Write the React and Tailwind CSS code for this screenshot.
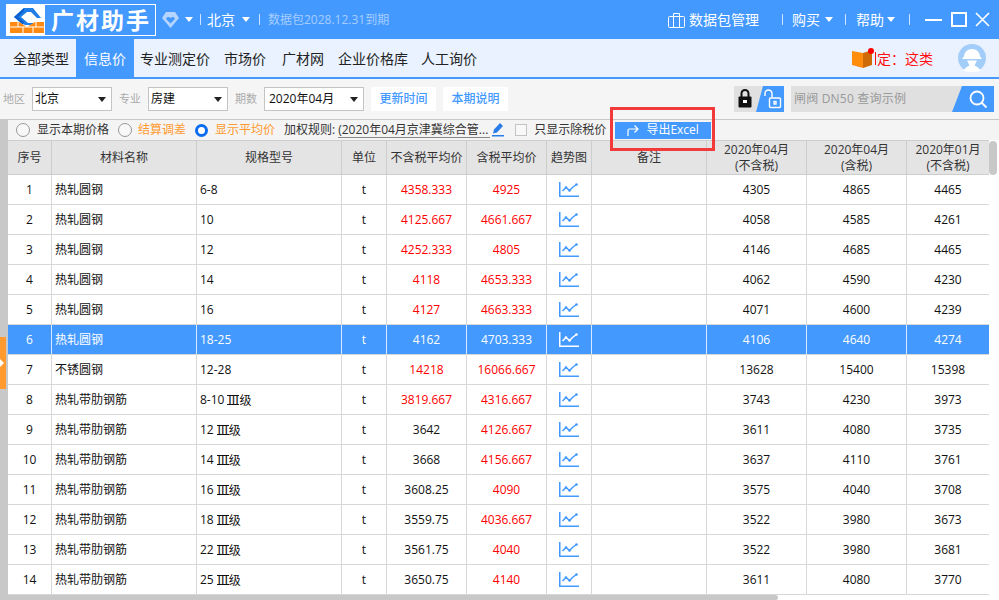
import React from 'react';

const FONT = '"Open Sans", "Noto Sans CJK SC", sans-serif';

const rows = [
    [1, '热轧圆钢', '6-8', '4358.333', '4925', 4305, 4865, 4465, true, true],
    [2, '热轧圆钢', '10', '4125.667', '4661.667', 4058, 4585, 4261, true, true],
    [3, '热轧圆钢', '12', '4252.333', '4805', 4146, 4685, 4465, true, true],
    [4, '热轧圆钢', '14', '4118', '4653.333', 4062, 4590, 4230, true, true],
    [5, '热轧圆钢', '16', '4127', '4663.333', 4071, 4600, 4239, true, true],
    [6, '热轧圆钢', '18-25', '4162', '4703.333', 4106, 4640, 4274, false, false],
    [7, '不锈圆钢', '12-28', '14218', '16066.667', 13628, 15400, 15398, true, true],
    [8, '热轧带肋钢筋', '8-10', '3819.667', '4316.667', 3743, 4230, 3973, true, true],
    [9, '热轧带肋钢筋', '12', '3642', '4126.667', 3611, 4080, 3735, false, true],
    [10, '热轧带肋钢筋', '14', '3668', '4156.667', 3637, 4110, 3761, false, true],
    [11, '热轧带肋钢筋', '16', '3608.25', '4090', 3575, 4040, 3708, false, true],
    [12, '热轧带肋钢筋', '18', '3559.75', '4036.667', 3522, 3980, 3673, false, true],
    [13, '热轧带肋钢筋', '22', '3561.75', '4040', 3522, 3980, 3681, false, true],
    [14, '热轧带肋钢筋', '25', '3650.75', '4140', 3611, 4080, 3770, false, true],
];

const tabs = [
    ['全部类型', 'w-[76px] pl-[6px]'],
    ['信息价', 'w-[58px]'],
    ['专业测定价', 'w-[82px]'],
    ['市场价', 'w-[58px]'],
    ['广材网', 'w-[58px]'],
    ['企业价格库', 'w-[82px]'],
    ['人工询价', 'w-[70px]'],
];

const COLS = 'grid grid-cols-[44px_145px_145px_45px_80px_80px_45px_115px_100px_100px_82px]';

function Caret({className}) {
    return <span className={`w-0 h-0 border-x-[4px] border-x-transparent border-t-[5px] border-t-white ${className}`}/>;
}

function Sep({className}) {
    return <span className={`w-px h-[11px] bg-[#cfe3ff] ${className}`}/>;
}

function TrendIcon({color}) {
    return (
        <svg width="20" height="15" viewBox="0 0 20 15">
            <path d="M0 0h1.500v13.500H20V15H0z" fill={color}/>
            <path d="M3.500 9L7 5.500l3.500 3L14 5l3.500-2.500" fill="none" stroke={color} strokeWidth="1.500"/>
            <circle cx="7" cy="5.500" r="1.300" fill={color}/>
            <circle cx="10.500" cy="8.500" r="1.300" fill={color}/>
            <circle cx="17.500" cy="2.500" r="1.300" fill={color}/>
        </svg>
    );
}

function Logo() {
    return (
        <div className="flex h-[32px] w-[150px] ml-[6px] border border-white">
            <div className="w-[39px] bg-white shrink-0 ml-[-1px] mt-[-1px] h-[32px]">
                <svg width="39" height="32" viewBox="0 0 39 32">
                    <path d="M18 4h9l8 10h-4l-6-6h-4l-6 5 7 6h6l-3 2h-6L8 13z" fill="#1f7fe6"/>
                    <path d="M8 13l10-9v3l-6 6 6 5-1 3z" fill="#0a5fd0"/>
                    <path d="M4 18h9l8 5 8-5h9v11H4z" fill="#ff8a12"/>
                    <path d="M4 23h34M12 18v5M30 18v5M17 23v6M27 23v6" stroke="#fff" strokeWidth="1"/>
                </svg>
            </div>
            <span className="ml-[6px] text-[23px] leading-[30px] font-bold text-white tracking-[2px] whitespace-nowrap">广材助手</span>
        </div>
    );
}

function TitleBar() {
    return (
        <div className="h-[39px] bg-[#4499ff] flex items-center text-white">
            <Logo/>
            <svg width="17" height="16" viewBox="0 0 17 16" className="ml-[6px]">
                <path d="M4 0h9l4 6-8.500 10L0 6z" fill="#b5d5ff"/>
                <path d="M8.500 11.500L4.500 7.500c-1-2 1.800-3.500 4-1.500 2.200-2 5-.5 4 1.500z" fill="#4499ff"/>
            </svg>
            <Caret className="ml-[6px]"/>
            <Sep className="ml-[7px]"/>
            <span className="ml-[6px] text-[14px]">北京</span>
            <Caret className="ml-[7px]"/>
            <Sep className="ml-[9px]"/>
            <span className="ml-[8px] text-[12px] text-[#a6cdff]">数据包2028.12.31到期</span>
            <svg width="17" height="16" viewBox="0 0 17 16" fill="none" stroke="#fff" className="ml-auto">
                <rect x="0.500" y="4.500" width="16" height="11" rx="1"/>
                <path d="M5.500 15V1.500h6V15"/>
            </svg>
            <span className="ml-[4px] text-[14px]">数据包管理</span>
            <Sep className="ml-[23px]"/>
            <span className="ml-[9px] text-[14px]">购买</span>
            <Caret className="ml-[5px]"/>
            <Sep className="ml-[12px]"/>
            <span className="ml-[10px] text-[14px]">帮助</span>
            <Caret className="ml-[3px]"/>
            <Sep className="ml-[14px]"/>
            <span className="ml-[15px] w-[17px] h-[2px] bg-white"/>
            <span className="ml-[9px] w-[16px] h-[15px] border-2 border-white"/>
            <svg width="15" height="15" viewBox="0 0 15 15" className="ml-[8px] mr-[9px]" stroke="#fff" strokeWidth="1.600">
                <path d="M1 1l13 13M14 1L1 14"/>
            </svg>
        </div>
    );
}

function TabBar() {
    return (
        <div className="h-[40px] bg-[#ebf2ff] border-b-2 border-[#4499ff] flex items-stretch text-[14px] text-[#222]">
            {tabs.map(([label, w], i) => (
                <div key={label} className={`${w} flex items-center justify-center whitespace-nowrap ${i === 1 ? 'bg-[#4499ff] text-white' : ''}`}>
                    {label}
                </div>
            ))}
            <div className="ml-auto flex items-center">
                <div className="relative w-[21px] h-[19px] mt-[1px]">
                    <svg width="21" height="19" viewBox="0 0 21 19">
                        <path d="M0 2l11 2v15L0 16z" fill="#ff8c0a"/>
                        <path d="M11 4l9-3v15l-9 3z" fill="#cf6a08"/>
                    </svg>
                    <span className="absolute right-[-1px] top-[-1px] w-[6px] h-[6px] rounded-full bg-[#ff0000]"/>
                </div>
                <div className="w-[60px] ml-[2px] flex items-center whitespace-nowrap text-[14px] text-[#ff1010]">
                    <span className="w-px h-[13px] bg-[#ff1010] mr-[1px]"/>
                    <span>定：这类</span>
                </div>
                <svg width="28" height="28" viewBox="0 0 28 28" className="ml-[23px] mr-[13px]">
                    <circle cx="14" cy="14" r="14" fill="#a3cdf9"/>
                    <path d="M6 13c0-5 3.500-8 8-8s8 3 8 8z" fill="#fff"/>
                    <rect x="4.500" y="13" width="19" height="2" rx="1" fill="#fff"/>
                    <path d="M9 16.500h10l-2.500 5c3 1 5 3 6 5-2.500 1.500-5.500 1.500-8.500 1.500s-6 0-8.500-1.500c1-2 3-4 6-5z" fill="#fff"/>
                </svg>
            </div>
        </div>
    );
}

function Select({value, className}) {
    return (
        <div className={`h-[24px] bg-white border border-[#c4c4c4] flex items-center justify-between pr-[5px] text-[12px] text-[#111] ${className}`}>
            <span>{value}</span>
            <span className="w-0 h-0 border-x-[4px] border-x-transparent border-t-[5px] border-t-[#222]"/>
        </div>
    );
}

function FilterBar() {
    return (
        <div className="h-[41px] bg-[#f5f5f5] border-b border-[#c8c8c8] flex items-center text-[12px]">
            <span className="ml-[3px] w-[29px] text-[11px] text-[#aaa]">地区</span>
            <Select value="北京" className="w-[80px] pl-[2px]"/>
            <span className="ml-[7px] w-[29px] text-[11px] text-[#aaa]">专业</span>
            <Select value="房建" className="w-[80px] pl-[2px]"/>
            <span className="ml-[7px] w-[29px] text-[11px] text-[#aaa]">期数</span>
            <Select value="2020年04月" className="w-[100px] pl-[4px]"/>
            <button className="ml-[7px] w-[65px] h-[24px] bg-white text-[#4499ff] font-medium">更新时间</button>
            <button className="ml-[7px] w-[65px] h-[24px] bg-white text-[#4499ff] font-medium">本期说明</button>
            <div className="ml-auto w-[50px] h-[26px] bg-[#e0e0e0] flex relative overflow-hidden">
                <svg width="14" height="19" viewBox="0 0 14 19" className="ml-[4px] mt-[3px]">
                    <path d="M3.500 8V4.500a3.500 3.500 0 017 0V8" fill="none" stroke="#111" strokeWidth="2"/>
                    <rect x="0.500" y="7.500" width="13" height="11" rx="1" fill="#111"/>
                    <rect x="5" y="11" width="4" height="3" fill="#fff"/>
                </svg>
                <div className="absolute right-0 top-0 w-[28px] h-[26px] bg-[#4499ff] [clip-path:polygon(7px_0,100%_0,100%_100%,0_100%)]">
                    <svg width="20" height="20" viewBox="0 0 20 20" className="ml-[7px] mt-[3px]" fill="none" stroke="#fff" strokeWidth="1.400">
                        <path d="M2 7V4.500a3.500 3.500 0 017 0V8"/>
                        <rect x="6.500" y="9" width="11" height="9.500" rx="1"/>
                        <rect x="11" y="12.500" width="2" height="2.500"/>
                    </svg>
                </div>
            </div>
            <div className="ml-[7px] mr-[5px] w-[203px] h-[26px] bg-[#e0e0e0] flex items-center relative">
                <span className="ml-[3px] text-[12px] text-[#999] tracking-[0.2px]">闸阀 DN50 查询示例</span>
                <div className="absolute right-0 top-0 w-[42px] h-[26px] bg-[#4499ff] [clip-path:polygon(10px_0,100%_0,100%_100%,0_100%)]">
                    <svg width="20" height="20" viewBox="0 0 20 20" className="ml-[16px] mt-[3px]" fill="none" stroke="#fff" strokeWidth="1.800">
                        <circle cx="9" cy="9" r="6.500"/>
                        <path d="M13.500 13.500l5 5"/>
                    </svg>
                </div>
            </div>
        </div>
    );
}

function Radio({on, className}) {
    return on
        ? <span className={`w-[13px] h-[13px] rounded-full border-[3px] border-[#0a6cf0] bg-white shrink-0 ${className}`}/>
        : <span className={`w-[14px] h-[14px] rounded-full border-[1.5px] border-[#999] bg-[#f8f8f8] shrink-0 ${className}`}/>;
}

function OptionBar() {
    return (
        <div className="h-[20px] bg-[#f4f4f4] flex items-center text-[12px] text-[#333] whitespace-nowrap">
            <div className="w-[8px] h-full bg-[#c8c8c8] shrink-0"/>
            <Radio className="ml-[8px]"/>
            <span className="ml-[7px] w-[72px]">显示本期价格</span>
            <Radio className="ml-[9px]"/>
            <span className="ml-[6px] w-[48px] text-[#ff9a2e]">结算调差</span>
            <Radio on className="ml-[9px]"/>
            <span className="ml-[7px] w-[60px] text-[#ff9a2e]">显示平均价</span>
            <span className="ml-[9px]">加权规则:</span>
            <span className="ml-[3px] w-[152px] border-b border-[#888] overflow-hidden leading-[15px]">(2020年04月京津冀综合管...</span>
            <svg width="12" height="14" viewBox="0 0 12 14" className="ml-[2px]">
                <path d="M8 0l3 3-6 6.500-4 1 1-4z" fill="#2a7de8"/>
                <rect x="0" y="12" width="12" height="1.500" fill="#2a7de8"/>
            </svg>
            <span className="ml-[11px] w-[12px] h-[12px] border border-[#c4c4c4] bg-[#f8f8f8]"/>
            <span className="ml-[7px] w-[72px]">只显示除税价</span>
            <button className="ml-[9px] w-[96px] h-[17px] bg-[#4499ff] text-white flex items-center justify-center gap-[7px]">
                <svg width="12" height="11" viewBox="0 0 12 11" fill="none" stroke="#fff" strokeWidth="1.200">
                    <path d="M1 11V5.500a1.500 1.500 0 011.500-1.500H11M7.500 0.500L11 4 7.500 7.500"/>
                </svg>
                <span className="text-[12px]">导出Excel</span>
            </button>
        </div>
    );
}

function HeadCell({children, last}) {
    return (
        <div className={`flex items-center justify-center text-center text-[12px] leading-[16px] text-[#333] whitespace-nowrap ${last ? '' : 'border-r border-[#cdcdcd]'}`}>
            {children}
        </div>
    );
}

function DataTable() {
    const heads = ['序号', '材料名称', '规格型号', '单位', '不含税平均价', '含税平均价', '趋势图', '备注'];
    return (
        <div className="w-[981px]">
            <div className={`${COLS} h-[35px] bg-[#e4e4e4] border-y border-[#cdcdcd] box-border`}>
                {heads.map(h => <HeadCell key={h}>{h}</HeadCell>)}
                <HeadCell>2020年04月<br/>(不含税)</HeadCell>
                <HeadCell>2020年04月<br/>(含税)</HeadCell>
                <HeadCell last>2020年01月<br/>(不含税)</HeadCell>
            </div>
            {rows.map(r => {
                const selected = r[0] === 6;
                const line = selected ? 'border-r border-[#d8e8ff]' : 'border-r border-[#d8d8d8]';
                const center = `${line} flex items-center justify-center`;
                const left = `${line} flex items-center pl-[3px]`;
                return (
                    <div
                        key={r[0]}
                        className={`${COLS} h-[30px] border-b border-[#d8d8d8] text-[12px] whitespace-nowrap ${selected ? 'bg-[#4499ff] text-white' : 'bg-white text-[#111]'}`}
                    >
                        <div className={center}>{r[0]}</div>
                        <div className={left}>{r[1]}</div>
                        <div className={left}>
                            {r[2]}
                            {r[0] >= 8 && (
                                <span className="ml-[3px] flex items-center font-['Noto_Sans_CJK_SC']">
                                    <span className="h-[10px] leading-[8px] border-y border-current">Ⅲ</span>级
                                </span>
                            )}
                        </div>
                        <div className={center}>t</div>
                        <div className={`${center} ${r[8] ? 'text-[#ff0000]' : ''}`}>{r[3]}</div>
                        <div className={`${center} ${r[9] ? 'text-[#ff0000]' : ''}`}>{r[4]}</div>
                        <div className={center}><TrendIcon color={selected ? '#fff' : '#4499ff'}/></div>
                        <div className={line}/>
                        <div className={center}>{r[5]}</div>
                        <div className={center}>{r[6]}</div>
                        <div className="flex items-center justify-center">{r[7]}</div>
                    </div>
                );
            })}
        </div>
    );
}

export default function App() {
    return (
        <div className="relative w-[999px] h-[600px] overflow-hidden bg-white" style={{fontFamily: FONT}}>
            <TitleBar/>
            <TabBar/>
            <FilterBar/>
            <OptionBar/>
            <div className="flex">
                <div className="w-[8px] h-[460px] bg-[#c8c8c8] shrink-0 relative">
                    <div className="absolute left-0 top-[197px] w-[6px] h-[52px] bg-[#ff9a2e] flex items-center">
                        <span className="w-0 h-0 border-y-[4px] border-y-transparent border-l-[4px] border-l-white"/>
                    </div>
                </div>
                <DataTable/>
            </div>
            {/* scrollbars */}
            <div className="absolute left-[989px] top-[141px] w-[8px] h-[34px] rounded-[4px] bg-[#c8c8c8]"/>
            <div className="absolute left-[8px] top-[595px] w-[770px] h-[5px] rounded-r-[3px] bg-[#c8c8c8]"/>
            {/* red annotation */}
            <div className="absolute left-[610px] top-[107px] w-[105px] h-[44px] border-[3px] border-[#f23a3a]"/>
        </div>
    );
}
